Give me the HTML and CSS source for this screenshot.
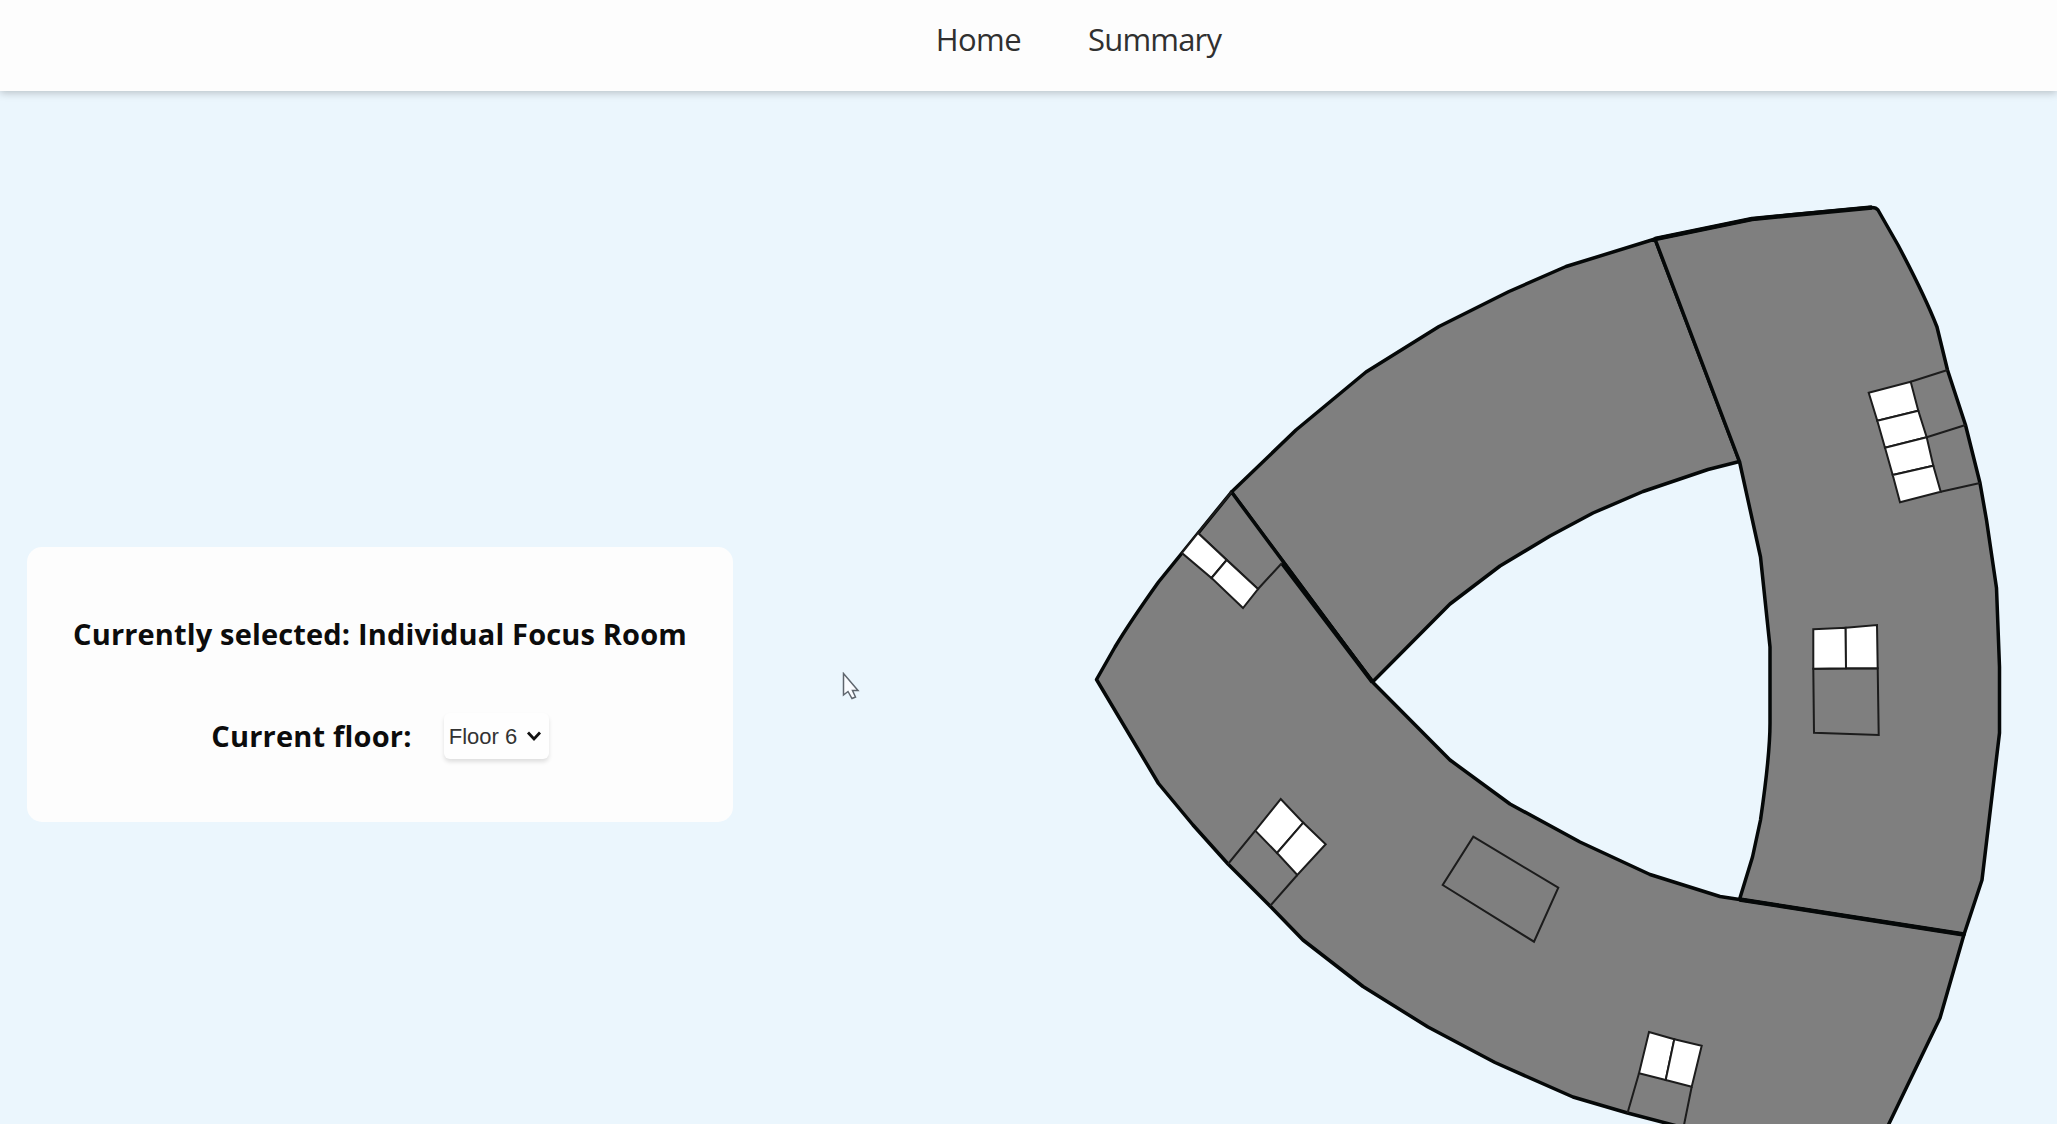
FILE: index.html
```html
<!DOCTYPE html>
<html lang="en">
<head>
<meta charset="utf-8">
<title>Floor plan</title>
<link rel="stylesheet" href="styles.css">
</head>
<body>
<header class="navbar">
  <nav class="nav">
    <a class="nav-link home" href="#">Home</a>
    <a class="nav-link summary" href="#">Summary</a>
  </nav>
</header>
<main class="content">
  <section class="card">
    <h2 class="label selected">Currently selected: Individual Focus Room</h2>
    <div class="floor-row">
      <label class="label floor" for="floor">Current floor:</label>
      <div class="picker">
        <select class="floor-select" id="floor"><option>Floor 6</option></select>
        <svg class="chevron" viewBox="0 0 16 12"><path d="M2 2.5 8 9 14 2.5"/></svg>
      </div>
    </div>
  </section>
  <svg class="plan" viewBox="1080 190 977 934">
    <g class="wing">
      <path d="M1231.5 492 1296 430 1366 372 1439 326.500 1509 291.500 1566 266.500 1655 239 1739.500 461.500 1708 469.500 1643 491.500 1593 513 1550 536 1500 566 1450 604 1372.500 682Z"/>
      <path d="M1655 239 1752 219 1789 215 1870 207.500 Q1876 207 1878 210 L1898 245 Q1925 296 1937 327 L1947.500 370 1965.500 425 1980 483 1986.500 520 1996.500 588 1999.500 667 1999.500 733 1982 880 1964 934.500 1739.500 899.500 1752.500 857 1760.500 820 Q1770 755 1770 723 L1770 647 1760.500 557 1739.500 461.500Z"/>
      <path d="M1231.500 492 1158.500 582 Q1130 622 1115 647 L1096.500 679.500 1158.500 783.500 1193 825 1228 864 1270 906 1303 940 1363 986.500 1428 1027 1495 1062.500 1573 1097 1627.500 1113 1700 1132 1884 1134 1940 1018 1964 934.500 1739.500 899.500 1720 896.500 1650 874.500 1580 842 1510 804 1450 760 1372.500 682Z"/>
      <path class="wall" d="M1282 563 1372.500 682M1739.500 899.500 1964 934.500M1655 239 1752 219 1872 207.500"/>
    </g>
    <g class="room">
      <path d="M1231.500 492 1198 533 1258 589 1282 563"/>
      <path d="M1910.700 381.700 1947.500 370M1926.700 437.300 1965.500 425M1940.700 491.700 1980 483"/>
      <path d="M1813.300 668.700 1814 732.700 1878.700 735 1877.700 668.300Z"/>
      <path d="M1255.300 830.700 1228 864M1297.300 875 1270 906"/>
      <path d="M1473.300 836.700 1558.300 887.700 1534 941.700 1442.700 885Z"/>
      <path d="M1639 1073.300 1627.500 1113M1691.700 1086.700 1683 1130"/>
    </g>
    <g class="focus">
      <path d="M1198 533 1226.700 560 1211.500 578 1182 553Z"/>
      <path d="M1226.700 560 1258 589 1243 608 1211.500 578Z"/>
      <path d="M1868.700 392.700 1910.700 381.700 1918.300 410.700 1877.300 420.700Z"/>
      <path d="M1877.300 420.700 1918.300 410.700 1926.700 437.300 1885 447.700Z"/>
      <path d="M1885 447.700 1926.700 437.300 1933.300 465.700 1892.700 475Z"/>
      <path d="M1892.700 475 1933.300 465.700 1940.700 491.700 1900 502.300Z"/>
      <path d="M1813.300 629.300 1845.700 627.700 1846 668.300 1813.300 668.700Z"/>
      <path d="M1845.700 627.700 1877 625 1877.700 668.300 1846 668.300Z"/>
      <path d="M1280.700 799 1303.300 822.700 1277 853 1255.300 830.700Z"/>
      <path d="M1303.300 822.700 1325.700 844.300 1297.300 875 1277 853Z"/>
      <path d="M1649 1032 1674.300 1039.300 1665.700 1080 1639 1073.300Z"/>
      <path d="M1674.300 1039.300 1701.700 1045.700 1691.700 1086.700 1665.700 1080Z"/>
    </g>
  </svg>
</main>
<svg class="cursor" viewBox="0 0 18 28"><path d="M1.500 1.500V23L6 19.500 10 26.500 13.500 25 10.500 18.500H16Z"/></svg>
</body>
</html>
```

FILE: styles.css
```css
* { box-sizing: border-box; }
body {
  margin: 0;
  height: 1124px;
  overflow: hidden;
  display: flex;
  flex-direction: column;
  background: #ebf6fd;
  font-family: "Open Sans", "Noto Sans", sans-serif;
  color: #0c0c0c;
}
.navbar {
  height: 91px;
  flex: none;
  background: #fdfdfd;
  box-shadow: 0 2px 8px rgba(0, 0, 0, .22);
}
.nav {
  display: flex;
  justify-content: center;
  gap: 67px;
  padding: 17px 0 0 100px;
}
.nav-link {
  color: #303030;
  font-size: 31px;
  line-height: 44px;
  text-decoration: none;
}
.home { letter-spacing: -.6px; }
.summary { letter-spacing: -.8px; }
.content {
  flex: 1;
  min-height: 0;
  display: flex;
  justify-content: space-between;
}
.card {
  width: 706px;
  height: 275px;
  margin: 456px 0 0 27px;
  padding-top: 62px;
  border-radius: 15px;
  background: #fdfdfd;
  display: flex;
  flex-direction: column;
  align-items: center;
  gap: 52px;
}
.label {
  margin: 0;
  font-size: 29px;
  font-weight: 700;
  line-height: 50px;
  white-space: nowrap;
}
.selected { letter-spacing: .15px; }
.floor { letter-spacing: .2px; }
.floor-row {
  display: flex;
  align-items: center;
  gap: 32px;
}
.picker {
  display: flex;
  align-items: center;
  width: 105px;
  height: 46px;
  padding-left: 5px;
  border-radius: 6px;
  background: #fefefe;
  box-shadow: 0 3px 4px rgba(0, 0, 0, .12);
}
.floor-select {
  appearance: none;
  width: 77px;
  padding: 0;
  border: 0;
  background: none;
  color: #333;
  font: 22px "Liberation Sans", Arial, sans-serif;
}
.chevron {
  width: 16px;
  height: 12px;
  fill: none;
  stroke: #111;
  stroke-width: 2.800;
}
.plan {
  flex: none;
  width: 977px;
  height: 934px;
  margin-top: 99px;
}
.wing path {
  fill: #7f7f7f;
  stroke: #050808;
  stroke-width: 3.500;
  stroke-linejoin: round;
}
.wing .wall {
  fill: none;
  stroke-width: 4.500;
}
.room path {
  fill: none;
  stroke: #1c1c1c;
  stroke-width: 2;
}
.focus path {
  fill: #fff;
  stroke: #1c1c1c;
  stroke-width: 2;
}
.cursor {
  position: absolute;
  left: 842px;
  top: 672px;
  width: 18px;
  height: 28px;
  fill: #fafcff;
  stroke: #5f666e;
  stroke-width: 1.500;
}
```
